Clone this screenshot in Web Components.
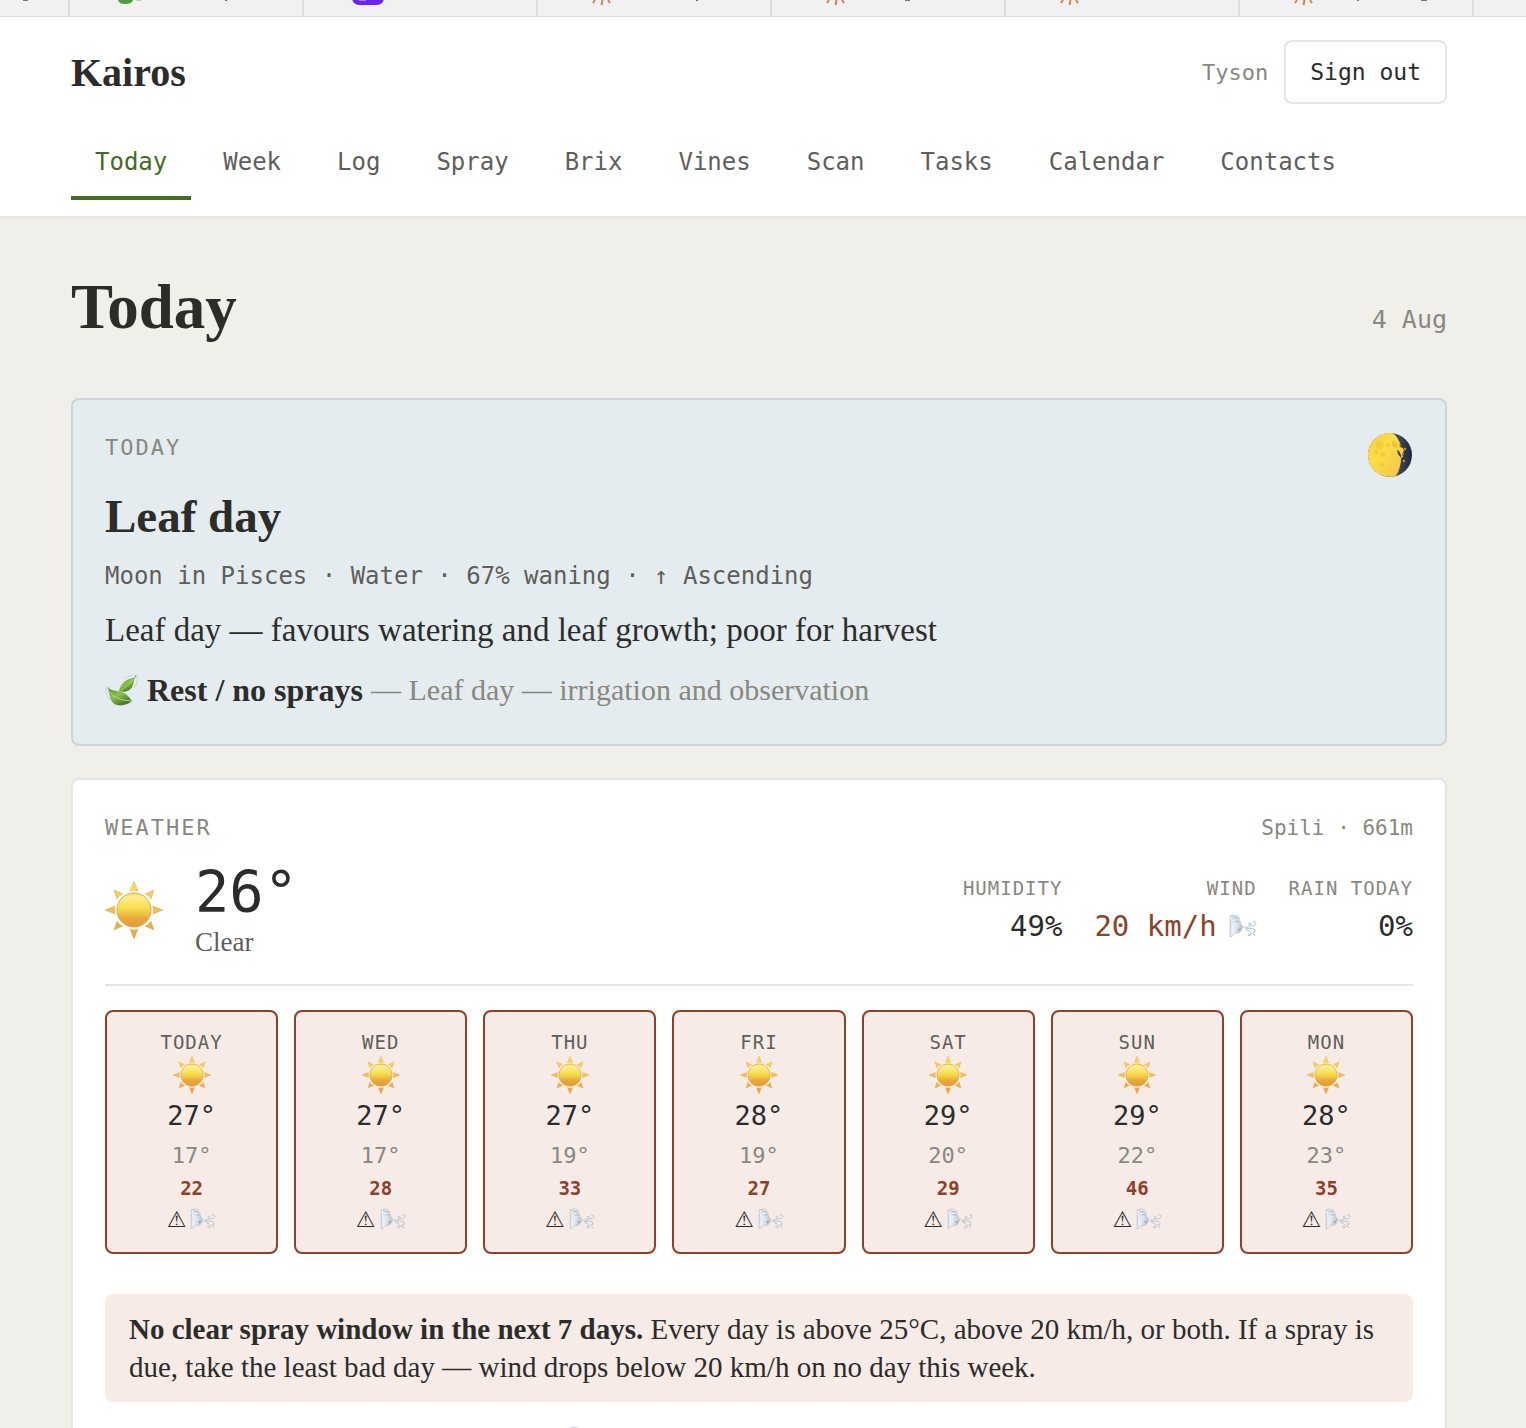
<!DOCTYPE html>
<html lang="en">
<head>
<meta charset="utf-8">
<meta name="viewport" content="width=device-width, initial-scale=1">
<title>Kairos</title>
<style>
  :root{
    --ink:#2c2c2a;
    --soft:#5f5e5a;
    --muted:#888780;
    --line:#e5e5e5;
    --rust:#8f4128;
    --blush:#f7ebe8;
    --green:#466b22;
    --serif:"Liberation Serif", serif;
    --mono:"DejaVu Sans Mono", monospace;
  }
  body{
    margin:0;
    height:100vh;
    overflow:hidden;
    background:#f0efea;
    color:var(--ink);
    font-family:var(--serif);
  }
  main{
    padding:52px 79px 0 71px;
  }
</style>
</head>
<body>
<tab-strip></tab-strip>
<site-header user="Tyson"></site-header>
<main>
  <page-title date="4 Aug">Today</page-title>
  <moon-card label="Today" day="Leaf day" meta="Moon in Pisces · Water · 67% waning · ↑ Ascending">
    Leaf day — favours watering and leaf growth; poor for harvest
    <strong slot="action">Rest / no sprays</strong>
    <span slot="reason">— Leaf day — irrigation and observation</span>
  </moon-card>
  <weather-card place="Spili · 661m" temp="26°" sky="Clear">
    <weather-stat slot="stats" label="Humidity">49%</weather-stat>
    <weather-stat slot="stats" label="Wind" alert>20 km/h</weather-stat>
    <weather-stat slot="stats" label="Rain today">0%</weather-stat>
    <forecast-day slot="days" day="Today" high="27°" low="17°" wind="22"></forecast-day>
    <forecast-day slot="days" day="Wed" high="27°" low="17°" wind="28"></forecast-day>
    <forecast-day slot="days" day="Thu" high="27°" low="19°" wind="33"></forecast-day>
    <forecast-day slot="days" day="Fri" high="28°" low="19°" wind="27"></forecast-day>
    <forecast-day slot="days" day="Sat" high="29°" low="20°" wind="29"></forecast-day>
    <forecast-day slot="days" day="Sun" high="29°" low="22°" wind="46"></forecast-day>
    <forecast-day slot="days" day="Mon" high="28°" low="23°" wind="35"></forecast-day>
    <spray-notice slot="notice"><strong>No clear spray window in the next 7 days.</strong> Every day is above 25°C, above 20 km/h, or both. If a spray is due, take the least bad day — wind drops below 20 km/h on no day this week.</spray-notice>
  </weather-card>
</main>

<script>
// every component fills its own open shadow root
class BaseElement extends HTMLElement{
  constructor(){
    super()
    this.attachShadow({mode: "open"})
  }
  attr(name){
    return this.getAttribute(name) || ""
  }
  connectedCallback(){
    const template = document.createElement("template")
    template.innerHTML = this.getTemplate()
    this.shadowRoot.replaceChildren(template.content.cloneNode(true))
  }
}

// drawings used by picto-icon
const pictos = {
  sun: `<svg viewBox="0 0 58 58">
    <defs>
      <linearGradient id="disc" x1="0" y1="0" x2="0" y2="1">
        <stop offset="0" stop-color="#fbe04e"/><stop offset=".12" stop-color="#fdf08f"/>
        <stop offset=".45" stop-color="#f8dc4c"/><stop offset=".75" stop-color="#e9a93a"/><stop offset="1" stop-color="#e59a39"/>
      </linearGradient>
      <linearGradient id="rays" gradientUnits="userSpaceOnUse" x1="0" y1="0" x2="0" y2="58">
        <stop offset="0" stop-color="#f9e04c"/><stop offset="1" stop-color="#e8a13a"/>
      </linearGradient>
    </defs>
    <g fill="url(#rays)" stroke="#e0a45a" stroke-width=".5">
      <path d="M29 0L33 10Q29 8 25 10Z"/><path d="M29 58L33 48Q29 50 25 48Z"/>
      <path d="M0 29L10 25Q9 29 10 33Z"/><path d="M58 29L48 25Q49 29 48 33Z"/>
      <path d="M9 9L18 13Q14 14 12 18Z"/><path d="M49 9L40 13Q44 14 46 18Z"/>
      <path d="M9 49L18 45Q14 44 12 40Z"/><path d="M49 49L40 45Q44 44 46 40Z"/>
    </g>
    <circle cx="29" cy="29" r="17" fill="url(#disc)" stroke="#e0a050" stroke-width="1"/>
  </svg>`,
  moon: `<svg viewBox="0 0 46 46">
    <defs>
      <linearGradient id="lit" x1="0" y1="0" x2="1" y2="1">
        <stop offset="0" stop-color="#f4cb48"/><stop offset=".4" stop-color="#fcdd45"/><stop offset="1" stop-color="#f0c34b"/>
      </linearGradient>
      <linearGradient id="dark"><stop offset=".7" stop-color="#434858"/><stop offset="1" stop-color="#1c2940"/></linearGradient>
    </defs>
    <circle cx="23" cy="23" r="22" fill="url(#dark)"/>
    <path d="M26 1.200C13 -1 1 9 1 23S13 47 28 44.400C31 42 32 38 33 34C34 31 34 28 34 26L36 25L35 22L37 19L36 16L34 15L33 11C31 7 29 3 26 1.200Z" fill="url(#lit)"/>
    <path d="M30 18L32 19L34 23L34 26L31 22Z" fill="#3e4046"/>
    <path d="M32 11L36 17L33 15Z" fill="#3e4046" opacity=".6"/>
    <path d="M25 9Q30 9 31 15Q27 17 25 13Z" fill="#dda83d" opacity=".5"/>
    <g fill="#e3b437" opacity=".35"><circle cx="13" cy="13" r="4"/><circle cx="16" cy="22" r="2.6"/><circle cx="9" cy="20" r="2.2"/><circle cx="15" cy="33" r="2"/><circle cx="21" cy="13" r="2.2"/></g>
    <g fill="#c3953d"><circle cx="37" cy="29" r="1.2"/><circle cx="38" cy="17" r="1.2"/><circle cx="36" cy="22" r="1"/></g>
  </svg>`,
  leaf: `<svg viewBox="0 0 34 34">
    <defs>
      <linearGradient id="green" x1="0" y1="0" x2=".6" y2="1">
        <stop offset="0" stop-color="#568d23"/><stop offset=".5" stop-color="#8bc34a"/><stop offset="1" stop-color="#3f7723"/>
      </linearGradient>
    </defs>
    <g fill="none" stroke="#c8cfd2" stroke-width="1"><path d="M1 14Q0 22 5 27"/><path d="M3 13Q2 17 4 20"/><path d="M32 2Q34 9 29 15"/><path d="M28 2Q22 3 19 6"/></g>
    <path d="M3 14C7 20 16 16 22 22C25 25 26 27 27 28C20 34 9 34 6 27C4 23 5 20 3 14Z" fill="url(#green)"/>
    <path d="M5 19Q10 27 26 28" fill="none" stroke="#c2da85" stroke-width=".9"/>
    <path d="M14 18C16 9 23 5 30 5C29 7 29 9 28 12C26 18 20 20 14 18Z" fill="url(#green)"/>
    <path d="M16 17Q23 14 29 6" fill="none" stroke="#b5d575" stroke-width=".8"/>
    <path d="M28 6Q30 5 31 2" fill="none" stroke="#6f9d40" stroke-width="1"/>
  </svg>`,
  wind: `<svg viewBox="0 0 28 24">
    <defs>
      <linearGradient id="face" x1="0" y1="0" x2="1" y2=".3">
        <stop offset="0" stop-color="#c3cbd6"/><stop offset=".45" stop-color="#e9eef4"/><stop offset="1" stop-color="#b9c5d2"/>
      </linearGradient>
    </defs>
    <path d="M1 2Q5 0 9 2C11 5 11 7 12 10L14 13Q14 15 12 15Q13 17 11 18Q9 20 6 19Q4 22 1 23Z" fill="url(#face)" stroke="#b3bdca" stroke-width=".6"/>
    <path d="M5 4Q8 3 9 5M6 8Q8 6 10 8" fill="none" stroke="#8b9bad" stroke-width=".8"/>
    <path d="M2 3Q4 10 3 19" fill="none" stroke="#eef2f6" stroke-width="1.5"/>
    <path d="M9 15L12 14.500L10 17Z" fill="#8593a4"/>
    <g fill="none" stroke="#b5c1cf" stroke-width="1">
      <path d="M15 13Q18 14 21 12Q23 10 21 9Q19 9 20 11"/>
      <path d="M22 12Q27 12 27 9Q26 6 24 8"/>
      <path d="M16 15Q23 13 26 16Q27 19 24 18"/>
      <path d="M17 16Q20 16 22 19Q22 22 20 22Q18 21 20 19"/>
      <path d="M23 19Q26 20 26 22"/>
    </g>
  </svg>`
}

class PictoIcon extends BaseElement{
  getTemplate(){
    return `<style>
      :host{ display:inline-block; flex:none; width:var(--size,32px); height:var(--size,32px); }
      :host([name="wind"]){ height:var(--tall,24px); }
      svg{ display:block; width:100%; height:100%; }
    </style>${pictos[this.attr("name")]}`
  }
}
customElements.define("picto-icon", PictoIcon)

// bottom edge of a row of tabs, the icons and descenders only just show
class TabStrip extends BaseElement{
  getTemplate(){
    const burst = `<path d="M57 0L55 3M64.500 0L63.500 5M70 0L72 3" stroke="#d97e5b" stroke-width="2"/>`
    const marks = [
      `<path d="M48 0Q49 4 55 4Q62 4 63 0Z" fill="#4f9b3f"/><path d="M65 0Q69 2 72 0Z" fill="#a8cf9c"/><path d="M156 0v1" stroke="#666" stroke-width="2"/>`,
      `<path d="M48 -6H80V-3Q80 5 72 5H56Q48 5 48 -3Z" fill="#6a25f5"/><path d="M55 0h7" stroke="#a57cff" stroke-width="2"/>`,
      burst + `<path d="M159 0v1" stroke="#666" stroke-width="2"/>`,
      burst + `<path d="M133 0h5" stroke="#777" stroke-width="2"/>`,
      burst,
      burst + `<path d="M118 0v1M181 0h6" stroke="#777" stroke-width="2"/>`,
      ``
    ]
    return `<style>
      :host{ display:flex; height:16px; overflow:hidden; background:#f1f1f1; border-bottom:1px solid #d9d9d9; }
      div{ box-sizing:border-box; flex:0 0 234px; border-left:2px solid #dedede; }
      .first{ flex-basis:68px; border:0; }
      svg{ display:block; width:100%; height:16px; }
    </style>
    <div class="first"><svg><path d="M23 0h5" stroke="#777" stroke-width="2"/></svg></div>
    ${marks.map(m => `<div><svg>${m}</svg></div>`).join("")}`
  }
}
customElements.define("tab-strip", TabStrip)

class SiteHeader extends BaseElement{
  getTemplate(){
    const pages = ["Today", "Week", "Log", "Spray", "Brix", "Vines", "Scan", "Tasks", "Calendar", "Contacts"]
    const links = pages.map((p, i) => `<a href="#${p.toLowerCase()}"${i === 0 ? ` aria-current="page"` : ""}>${p}</a>`)
    return `<style>
      :host{ display:block; background:#fff; border-bottom:2px solid var(--line); padding:23px 79px 16px 71px; font-family:var(--mono); }
      .top{ display:flex; align-items:center; gap:16px; height:64px; }
      .brand{ margin-right:auto; font:bold 40px var(--serif); color:var(--ink); text-decoration:none; }
      .user{ font-size:22px; color:var(--muted); }
      button{ box-sizing:border-box; height:64px; padding:0 24px; border:2px solid var(--line); border-radius:8px; background:#fff; color:var(--ink); font:23px var(--mono); }
      nav{ display:flex; gap:8px; margin-top:20px; }
      nav a{ padding:20px 24px 16px; border-bottom:4px solid transparent; color:var(--soft); font-size:24px; line-height:36px; text-decoration:none; }
      nav a[aria-current]{ color:var(--green); border-color:var(--green); }
    </style>
    <div class="top">
      <a class="brand" href="#">Kairos</a>
      <span class="user">${this.attr("user")}</span>
      <button type="button">Sign out</button>
    </div>
    <nav>${links.join("")}</nav>`
  }
}
customElements.define("site-header", SiteHeader)

class PageTitle extends BaseElement{
  getTemplate(){
    return `<style>
      :host{ display:flex; justify-content:space-between; align-items:baseline; margin-bottom:54px; }
      h1{ margin:0; font-size:63px; line-height:74px; }
      time{ font:25px var(--mono); color:var(--muted); }
    </style>
    <h1><slot></slot></h1><time>${this.attr("date")}</time>`
  }
}
customElements.define("page-title", PageTitle)

class MoonCard extends BaseElement{
  getTemplate(){
    return `<style>
      :host{ display:flex; justify-content:space-between; align-items:flex-start; padding:32px; margin-bottom:32px; border:2px solid #cbd5da; border-radius:8px; background:#e5ecef; }
      p, h2{ margin:0; }
      .label{ font:22px/32px var(--mono); letter-spacing:2px; text-transform:uppercase; color:var(--muted); }
      h2{ margin-top:24px; font-size:47px; line-height:56px; }
      .meta{ margin-top:12px; font:24px/40px var(--mono); color:var(--soft); }
      .text{ margin-top:12px; font-size:33px; line-height:44px; }
      .spray{ display:flex; align-items:center; gap:8px; margin-top:16px; font-size:30px; line-height:44px; }
      .action{ font-size:32px; }
      .reason{ color:var(--muted); }
      .leaf{ --size:34px; }
      .moon{ --size:46px; }
    </style>
    <div>
      <p class="label">${this.attr("label")}</p>
      <h2>${this.attr("day")}</h2>
      <p class="meta">${this.attr("meta")}</p>
      <p class="text"><slot></slot></p>
      <p class="spray"><picto-icon class="leaf" name="leaf"></picto-icon><span class="action"><slot name="action"></slot></span><span class="reason"><slot name="reason"></slot></span></p>
    </div>
    <picto-icon class="moon" name="moon"></picto-icon>`
  }
}
customElements.define("moon-card", MoonCard)

class WeatherStat extends BaseElement{
  getTemplate(){
    const icon = this.hasAttribute("alert") ? `<picto-icon name="wind"></picto-icon>` : ""
    return `<style>
      :host{ display:block; text-align:right; font-family:var(--mono); }
      .label{ font-size:19px; line-height:32px; letter-spacing:1px; text-transform:uppercase; color:var(--muted); }
      .value{ display:flex; justify-content:flex-end; align-items:center; gap:12px; font-size:29px; line-height:44px; }
      :host([alert]) .value{ color:var(--rust); }
      picto-icon{ --size:28px; }
    </style>
    <div class="label">${this.attr("label")}</div>
    <div class="value"><slot></slot>${icon}</div>`
  }
}
customElements.define("weather-stat", WeatherStat)

class ForecastDay extends BaseElement{
  getTemplate(){
    return `<style>
      :host{ display:flex; flex-direction:column; align-items:center; padding:16px 0; border:2px solid var(--rust); border-radius:8px; background:var(--blush); font-family:var(--mono); }
      .day{ font-size:19px; line-height:28px; letter-spacing:1px; text-transform:uppercase; color:var(--soft); }
      .high{ font-size:27px; line-height:44px; }
      .low{ font-size:22px; line-height:36px; color:var(--muted); }
      .wind{ font-size:19px; line-height:28px; font-weight:bold; color:var(--rust); }
      .flags{ display:flex; align-items:center; gap:4px; height:34px; font:22px "DejaVu Sans", sans-serif; }
      .sun{ --size:38px; }
      .gust{ --size:26px; --tall:22px; }
    </style>
    <span class="day">${this.attr("day")}</span>
    <picto-icon class="sun" name="sun"></picto-icon>
    <span class="high">${this.attr("high")}</span>
    <span class="low">${this.attr("low")}</span>
    <span class="wind">${this.attr("wind")}</span>
    <span class="flags">⚠<picto-icon class="gust" name="wind"></picto-icon></span>`
  }
}
customElements.define("forecast-day", ForecastDay)

class SprayNotice extends BaseElement{
  getTemplate(){
    return `<style>
      :host{ display:block; margin-top:40px; padding:16px 24px; border-radius:8px; background:var(--blush); font-size:29px; line-height:38px; }
    </style><slot></slot>`
  }
}
customElements.define("spray-notice", SprayNotice)

class WeatherCard extends BaseElement{
  getTemplate(){
    return `<style>
      :host{ display:block; padding:32px; border:2px solid var(--line); border-radius:8px; background:#fff; }
      header{ display:flex; justify-content:space-between; align-items:center; }
      h2{ margin:0; font:22px/32px var(--mono); letter-spacing:2px; text-transform:uppercase; color:var(--muted); }
      .place{ font:21px var(--mono); color:var(--muted); }
      .now{ display:flex; align-items:center; gap:32px; margin-top:16px; padding-bottom:24px; border-bottom:2px solid var(--line); }
      .now > div{ margin-right:auto; }
      .temp{ font:57px/64px var(--mono); }
      .sky{ font-size:27px; line-height:36px; color:var(--soft); }
      .sun{ --size:58px; }
      .days{ display:grid; grid-template-columns:repeat(7, 1fr); gap:16px; margin-top:24px; }
      footer{ display:flex; justify-content:center; padding:24px 352px 0 0; }
      footer picto-icon{ --size:28px; }
    </style>
    <header><h2>Weather</h2><span class="place">${this.attr("place")}</span></header>
    <div class="now">
      <picto-icon class="sun" name="sun"></picto-icon>
      <div>
        <div class="temp">${this.attr("temp")}</div>
        <div class="sky">${this.attr("sky")}</div>
      </div>
      <slot name="stats"></slot>
    </div>
    <div class="days"><slot name="days"></slot></div>
    <slot name="notice"></slot>
    <footer><picto-icon name="wind"></picto-icon></footer>`
  }
}
customElements.define("weather-card", WeatherCard)
</script>
</body>
</html>
